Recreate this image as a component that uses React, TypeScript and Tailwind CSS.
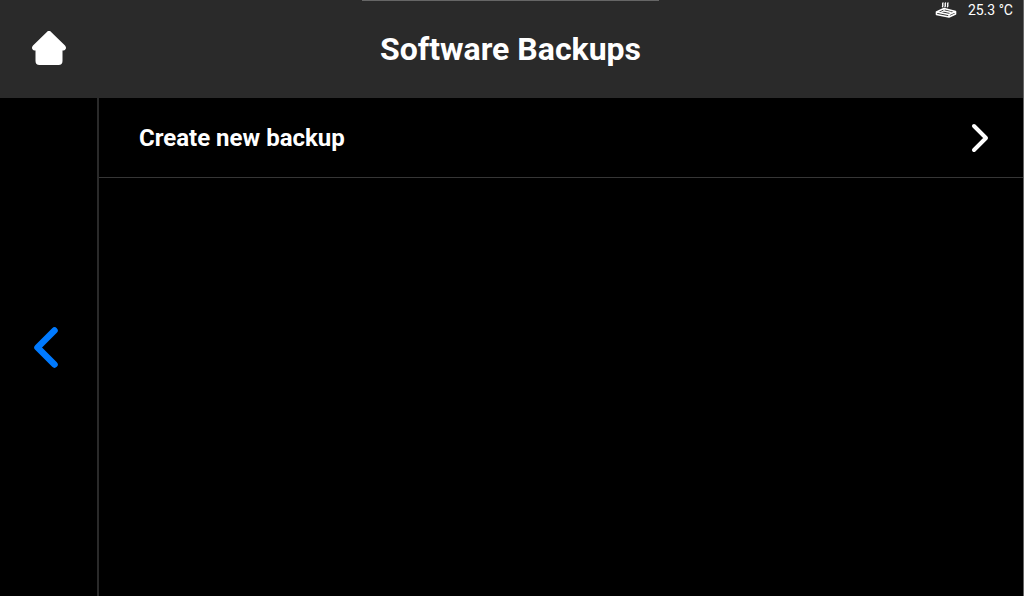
import React from "react";

function HomeIcon() {
  return (
    <svg width="36" height="36" viewBox="0 0 36 36" fill="#fff" aria-hidden="true">
      <path d="M15.900 0.900a3 3 0 0 1 4.200 0L34 14.400c1.900 1.900 1 5-1.600 5H31.500V30a4 4 0 0 1-4 4H8.500a4 4 0 0 1-4-4V19.400H3.600c-2.600 0-3.500-3.100-1.600-5z" />
    </svg>
  );
}

function BackIcon() {
  return (
    <svg width="26" height="42" viewBox="0 0 26 42" fill="none" stroke="#007aff" strokeWidth="6.500" strokeLinecap="round" strokeLinejoin="round" aria-hidden="true">
      <path d="M21.500 4.500 4.500 21.500l17 17" />
    </svg>
  );
}

function ForwardIcon() {
  return (
    <svg width="18" height="30" viewBox="0 0 18 30" fill="none" stroke="#fff" strokeWidth="4" strokeLinecap="round" strokeLinejoin="round" aria-hidden="true">
      <path d="m3 3 12 12L3 27" />
    </svg>
  );
}

function HeatedBedIcon() {
  return (
    <svg width="22" height="20" viewBox="0 0 22 20" fill="none" stroke="#fff" strokeLinejoin="round" strokeLinecap="round" aria-hidden="true">
      <path strokeWidth="1.600" d="M1.500 12 9 8.500l11.500 3v2.500L14 17 1.500 14.500zM1.500 12 14 14.500l6.500-3M14 14.500V17" />
      <path strokeWidth="1.300" d="M9 8.500V11l7 1.500M9 11l-3.500 1.500" />
      <path strokeWidth="1.400" d="M8 3c-1 1 .5 2-.5 3.700M10.500 3c-1 1 .5 2-.5 3.700M13 3c-1 1 .5 2-.5 3.700" />
    </svg>
  );
}

export default function App() {
  return (
    <div className="flex min-h-screen flex-col border-r border-[#666666] bg-black font-['Roboto',sans-serif] text-white">
      <header className="relative grid h-[98px] grid-cols-[98px_1fr_100px] items-center bg-[#2a2a2a]">
        <div className="absolute inset-x-0 top-0 flex justify-center pr-0.5">
          <div className="h-px w-[297px] bg-[#666666]" />
        </div>
        <button type="button" aria-label="Home" className="flex justify-center">
          <HomeIcon />
        </button>
        <h1 className="text-center text-[32px] leading-10 font-bold">Software Backups</h1>
        <div className="flex items-center justify-end gap-[11px] self-start pr-2.5 text-sm leading-5 whitespace-nowrap">
          <HeatedBedIcon />
          <span>25.3 °C</span>
        </div>
      </header>
      <div className="flex flex-1">
        <nav className="flex w-[99px] border-r-2 border-[#2a2a2a]">
          <button type="button" aria-label="Back" className="flex flex-1 items-center justify-center pr-1.5">
            <BackIcon />
          </button>
        </nav>
        <main className="flex-1">
          <button type="button" className="flex h-20 w-full items-center justify-between border-b border-[#363636] pr-[34px] pl-10 text-left text-2xl font-bold">
            <span>Create new backup</span>
            <ForwardIcon />
          </button>
        </main>
      </div>
    </div>
  );
}
